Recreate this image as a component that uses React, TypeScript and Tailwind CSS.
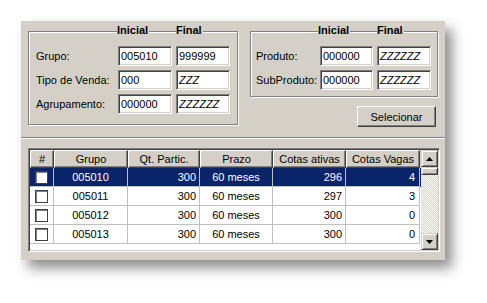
import React from "react";

const sunken =
	"border border-t-[#808080] border-l-[#808080] border-b-white border-r-white shadow-[inset_1px_1px_0_#404040,inset_-1px_-1px_0_#d4d0c8]";
const raised =
	"border border-t-white border-l-white border-b-[#404040] border-r-[#404040] shadow-[inset_-1px_-1px_0_#808080]";
const raisedScroll =
	"border border-t-[#d4d0c8] border-l-[#d4d0c8] border-b-[#404040] border-r-[#404040] shadow-[inset_1px_1px_0_#fff,inset_-1px_-1px_0_#808080]";
const etched = "border border-[#808080] shadow-[inset_1px_1px_0_#fff,1px_1px_0_#fff]";

const Field = ({ value, italic }: { value: string; italic?: boolean }) => (
	<div className={`h-[20px] bg-white pl-[2px] leading-[18px] ${sunken} ${italic ? "italic" : ""}`}>{value}</div>
);

const rows = [
	{ grupo: "005010", qt: "300", prazo: "60 meses", ativas: "296", vagas: "4", selected: true },
	{ grupo: "005011", qt: "300", prazo: "60 meses", ativas: "297", vagas: "3" },
	{ grupo: "005012", qt: "300", prazo: "60 meses", ativas: "300", vagas: "0" },
	{ grupo: "005013", qt: "300", prazo: "60 meses", ativas: "300", vagas: "0" },
];

const cols = "grid grid-cols-[24px_74px_72px_73px_73px_74px]";

const Arrow = ({ down }: { down?: boolean }) => (
	<svg width="7" height="4" viewBox="0 0 7 4">
		<polygon points={down ? "0,0 7,0 3.5,4" : "3.5,0 7,4 0,4"} fill="#000" />
	</svg>
);

const App = () => {
	return (
		<div className="w-[487px] h-[303px] bg-white pt-[21px] pl-[21px] font-['Liberation_Sans',Arial,sans-serif] text-[11px] text-black">
			<div className="w-[424px] h-[239px] bg-[#d4d0c8] shadow-[7px_8px_12px_rgba(0,0,0,0.45)] flex flex-col">
				{/* filtros */}
				<div className="flex items-start px-[7px] pt-[10px] h-[105px]">
					<div className={`w-[211px] h-[94px] ${etched}`}>
						<div className="grid grid-cols-[78px_54px_54px] gap-x-[4px] pl-[7px] -mt-[8px] h-[13px] leading-[13px] font-bold">
							<span />
							<span className="justify-self-start bg-[#d4d0c8] -ml-[1px] pr-[1px]">Inicial</span>
							<span className="justify-self-start bg-[#d4d0c8] pr-[1px]">Final</span>
						</div>
						<div className="grid grid-cols-[78px_54px_54px] gap-x-[4px] gap-y-[4px] pl-[7px] mt-[9px] items-center">
							<span>Grupo:</span>
							<Field value="005010" />
							<Field value="999999" />
							<span>Tipo de Venda:</span>
							<Field value="000" />
							<Field value="ZZZ" italic />
							<span>Agrupamento:</span>
							<Field value="000000" />
							<Field value="ZZZZZZ" italic />
						</div>
					</div>

					<div className="ml-[12px] w-[189px] flex flex-col">
						<div className={`w-[188px] h-[66px] ${etched}`}>
							<div className="grid grid-cols-[60px_53px_54px] gap-x-[4px] pl-[5px] -mt-[8px] h-[13px] leading-[13px] font-bold">
								<span />
								<span className="justify-self-start bg-[#d4d0c8] -ml-[2px] pr-[1px]">Inicial</span>
								<span className="justify-self-start bg-[#d4d0c8] pr-[1px]">Final</span>
							</div>
							<div className="grid grid-cols-[60px_53px_54px] gap-x-[4px] gap-y-[4px] pl-[5px] mt-[9px] items-center">
								<span>Produto:</span>
								<Field value="000000" />
								<Field value="ZZZZZZ" italic />
								<span>SubProduto:</span>
								<Field value="000000" />
								<Field value="ZZZZZZ" italic />
							</div>
						</div>
						<button
							type="button"
							className={`self-end mr-[2px] mt-[9px] w-[79px] h-[21px] bg-[#d4d0c8] leading-[18px] text-center ${raised}`}
						>
							Selecionar
						</button>
					</div>
				</div>

				<div className="mt-[11px] h-[2px] border-t border-t-[#808080] border-b border-b-white" />

				{/* grade */}
				<div className={`mx-[7px] mt-[9px] w-[412px] h-[104px] p-[1px] flex ${sunken}`}>
					<div className="flex-1 bg-white">
						<div className={`${cols} h-[18px] leading-[16px] bg-[#d4d0c8]`}>
							{["#", "Grupo", "Qt. Partic.", "Prazo", "Cotas ativas", "Cotas Vagas"].map((h) => (
								<div key={h} className={`text-center ${raised}`}>
									{h}
								</div>
							))}
						</div>
						{rows.map((r) => (
							<div
								key={r.grupo}
								className={`${cols} h-[19px] leading-[18px] ${r.selected ? "bg-[#0a246a] text-white" : ""}`}
							>
								<div className="flex items-center justify-center border-r border-b border-[#c0c0c0]">
									<div className="w-[13px] h-[13px] bg-white border border-[#404040] shadow-[inset_1px_1px_0_#808080]" />
								</div>
								<div className="text-center border-r border-b border-[#c0c0c0]">{r.grupo}</div>
								<div className="text-right pr-[3px] border-r border-b border-[#c0c0c0]">{r.qt}</div>
								<div className="text-center border-r border-b border-[#c0c0c0]">{r.prazo}</div>
								<div className="text-right pr-[3px] border-r border-b border-[#c0c0c0]">{r.ativas}</div>
								<div className="text-right pr-[4px] border-r border-b border-[#c0c0c0]">{r.vagas}</div>
							</div>
						))}
					</div>
					<div className="w-[17px] flex flex-col">
						<div className={`h-[17px] flex items-center justify-center bg-[#d4d0c8] ${raisedScroll}`}>
							<Arrow />
						</div>
						<div className={`h-[8px] bg-[#d4d0c8] ${raisedScroll}`} />
						<div className="flex-1 bg-[repeating-conic-gradient(#d4d0c8_0_25%,#ffffff_0_50%)] bg-[length:2px_2px]" />
						<div className={`h-[17px] flex items-center justify-center bg-[#d4d0c8] ${raisedScroll}`}>
							<Arrow down />
						</div>
					</div>
				</div>
			</div>
		</div>
	);
};

export default App;
